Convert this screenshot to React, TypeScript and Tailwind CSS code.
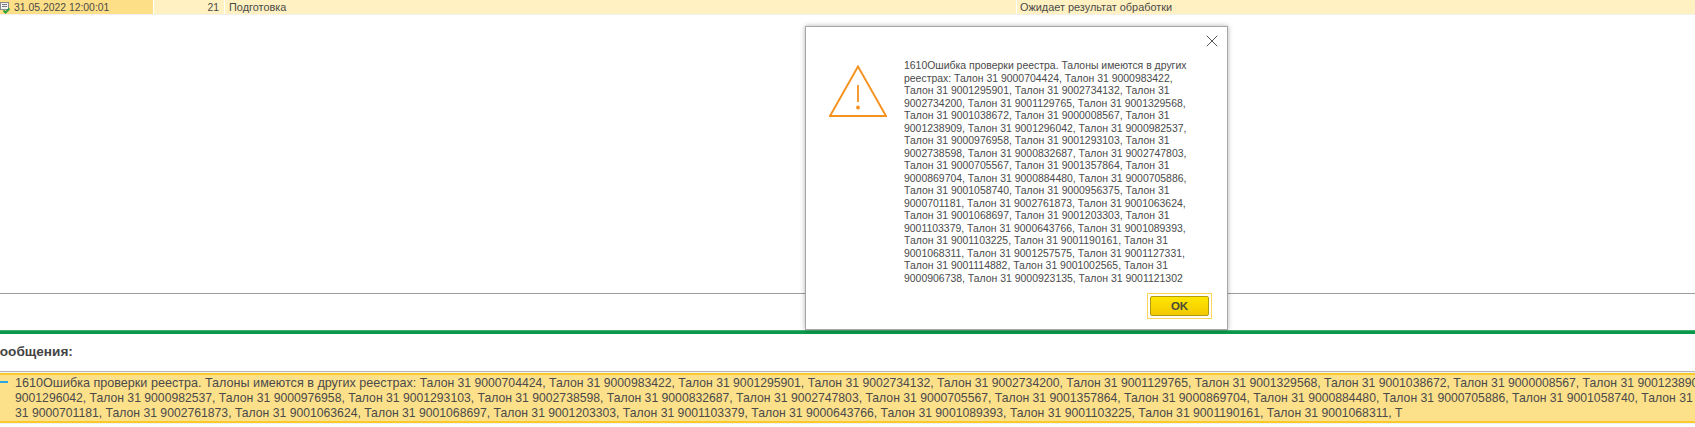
import React from 'react';
import { X } from 'lucide-react';

const dialogLines = [
  '1610Ошибка проверки реестра. Талоны имеются в других',
  'реестрах: Талон 31 9000704424, Талон 31 9000983422,',
  'Талон 31 9001295901, Талон 31 9002734132, Талон 31',
  '9002734200, Талон 31 9001129765, Талон 31 9001329568,',
  'Талон 31 9001038672, Талон 31 9000008567, Талон 31',
  '9001238909, Талон 31 9001296042, Талон 31 9000982537,',
  'Талон 31 9000976958, Талон 31 9001293103, Талон 31',
  '9002738598, Талон 31 9000832687, Талон 31 9002747803,',
  'Талон 31 9000705567, Талон 31 9001357864, Талон 31',
  '9000869704, Талон 31 9000884480, Талон 31 9000705886,',
  'Талон 31 9001058740, Талон 31 9000956375, Талон 31',
  '9000701181, Талон 31 9002761873, Талон 31 9001063624,',
  'Талон 31 9001068697, Талон 31 9001203303, Талон 31',
  '9001103379, Талон 31 9000643766, Талон 31 9001089393,',
  'Талон 31 9001103225, Талон 31 9001190161, Талон 31',
  '9001068311, Талон 31 9001257575, Талон 31 9001127331,',
  'Талон 31 9001114882, Талон 31 9001002565, Талон 31',
  '9000906738, Талон 31 9000923135, Талон 31 9001121302',
];

const messageLines = [
  'Талон 31 9000704424, Талон 31 9000983422, Талон 31 9001295901, Талон 31 9002734132, Талон 31 9002734200, Талон 31 9001129765, Талон 31 9001329568, Талон 31 9001038672, Талон 31 9000008567, Талон 31 9001238909,',
  '9001296042, Талон 31 9000982537, Талон 31 9000976958, Талон 31 9001293103, Талон 31 9002738598, Талон 31 9000832687, Талон 31 9002747803, Талон 31 9000705567, Талон 31 9001357864, Талон 31 9000869704, Талон 31 9000884480, Талон 31 9000705886, Талон 31 9001058740, Талон 31',
  '31 9000701181, Талон 31 9002761873, Талон 31 9001063624, Талон 31 9001068697, Талон 31 9001203303, Талон 31 9001103379, Талон 31 9000643766, Талон 31 9001089393, Талон 31 9001103225, Талон 31 9001190161, Талон 31 9001068311, Т',
];

const RowIcon = () => (
  <svg width="11" height="13" viewBox="0 0 11 13" className="shrink-0">
    <rect x="0.5" y="1.5" width="8" height="7" fill="#f4f4f4" stroke="#8a8a8a" />
    <path d="M2 3.5h5M2 5.5h5" stroke="#777" />
    <path d="M3.5 9.5l2 2 4-4" fill="none" stroke="#2f9e44" strokeWidth="2" />
  </svg>
);

const WarningIcon = () => (
  <svg width="58" height="52" viewBox="0 0 58 52" fill="none">
    <path d="M29 1.5L1 51h56z" stroke="#f5911e" strokeWidth="1.9" />
    <path d="M29 20v17" stroke="#f5911e" strokeWidth="1.8" />
    <circle cx="29" cy="42.5" r="1.9" fill="#f5911e" />
  </svg>
);

export default function App() {
  return (
    <div className="relative w-[1695px] h-[427px] overflow-hidden bg-white font-['Liberation_Sans',Arial,sans-serif] text-[#4a4a4a]">
      {/* Table row */}
      <div className="flex h-[15px] border-b border-[#f0f0f0] text-[10.9px] leading-[15px]">
        <div className="w-[153px] bg-[#fddf87] flex items-center gap-[3px] text-[10.4px]">
          <RowIcon />
          <span>31.05.2022 12:00:01</span>
        </div>
        <div className="w-[70px] ml-px bg-[#fff1c1] text-right pr-[5px] text-[10.4px]">21</div>
        <div className="w-[791px] ml-px bg-[#fff1c1] pl-[4px]">Подготовка</div>
        <div className="flex-1 ml-px bg-[#fff1c1] pl-[3px]">Ожидает результат обработки</div>
      </div>

      <div className="h-[278px]" />
      <div className="h-px bg-[#9c9c9c]" />
      <div className="h-[36px]" />
      <div className="h-[4px] bg-[#089a4a] border-t border-[#45ad76]" />

      {/* Messages */}
      <div className="h-[37px] flex items-center">
        <span className="-ml-[10px] text-[13.6px] font-bold text-[#444]">Сообщения:</span>
      </div>
      <div className="border-t border-[#b5b5b5] h-[53px] pt-px bg-[#eef0f2]">
        <div className="relative h-[50px] bg-[#fde08a] border-y-2 border-[#fcc92b] pl-[15px] pt-[1px] overflow-hidden text-[12.2px] leading-[15.2px]">
          <span className="absolute left-0 top-[6px] w-[8px] h-[2px] bg-[#2aa7df]" />
          {messageLines.map((line, i) => (
            <div key={line} className="whitespace-nowrap">
              {i === 0 && <span className="text-[12.6px]">1610Ошибка проверки реестра. Талоны имеются в других реестрах: </span>}
              {line}
            </div>
          ))}
        </div>
      </div>

      {/* Dialog */}
      <div className="absolute left-[805px] top-[26px] w-[423px] h-[304px] bg-white border border-[#a6a6a6] shadow-[0_0_5px_rgba(0,0,0,0.3)]">
        <X className="absolute right-[5px] top-[4px] w-[20px] h-[20px] text-[#555]" strokeWidth={1.2} />
        <div className="flex pt-[33px]">
          <div className="w-[98px] pl-[23px] pt-[5px] shrink-0">
            <WarningIcon />
          </div>
          <div className="text-[10.45px] leading-[12.52px]">
            {dialogLines.map((line) => (
              <div key={line} className="whitespace-nowrap">{line}</div>
            ))}
          </div>
        </div>
        <div className="absolute right-[15px] bottom-[10px] border border-[#fcd65c] p-[2px]">
          <button className="block w-[59px] h-[20px] rounded-[2px] border border-[#b09a10] bg-gradient-to-b from-[#ffe600] to-[#f2c900] text-[11.5px] leading-[18px] font-bold text-[#4a4a3a]">
            OK
          </button>
        </div>
      </div>
    </div>
  );
}
